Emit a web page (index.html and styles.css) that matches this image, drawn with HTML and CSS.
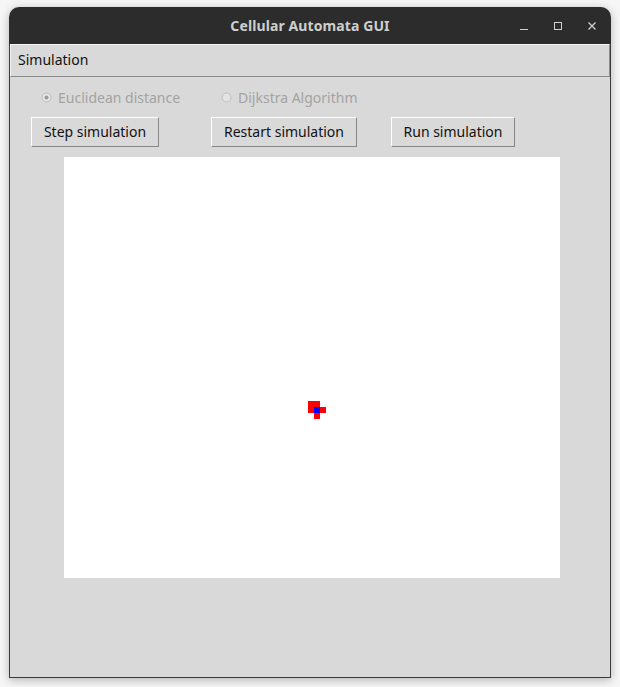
FILE: index.html
```html
<!DOCTYPE html>
<html>
<head>
<meta charset="utf-8">
<link rel="stylesheet" href="styles.css">
</head>
<body>
<div class="window">
  <div class="titlebar">
    <div class="title-spacer"></div>
    <div class="title">Cellular Automata GUI</div>
    <div class="controls">
      <svg class="ctl" width="10" height="10" viewBox="0 0 10 10"><line x1="1" y1="8.5" x2="9" y2="8.5" stroke="#cfcfcf" stroke-width="1"/></svg>
      <svg class="ctl" width="10" height="10" viewBox="0 0 10 10"><rect x="1.5" y="1.5" width="7" height="7" fill="none" stroke="#cfcfcf" stroke-width="1"/></svg>
      <svg class="ctl" width="10" height="10" viewBox="0 0 10 10"><path d="M1.5 1.5 L8.5 8.5 M8.5 1.5 L1.5 8.5" stroke="#cfcfcf" stroke-width="1.3"/></svg>
    </div>
  </div>
  <div class="client">
    <div class="menubar"><span class="menu-item">Simulation</span></div>
    <div class="radios">
      <label class="radio radio-1">
        <svg width="11" height="11" viewBox="0 0 11 11"><circle cx="5.5" cy="5.5" r="4.5" fill="#e4e4e4" stroke="#bdbdbd" stroke-width="1"/><circle cx="5.5" cy="5.5" r="2" fill="#9a9a9a"/></svg>
        <span>Euclidean distance</span>
      </label>
      <label class="radio radio-2">
        <svg width="11" height="11" viewBox="0 0 11 11"><circle cx="5.5" cy="5.5" r="4.5" fill="#e4e4e4" stroke="#bdbdbd" stroke-width="1"/></svg>
        <span>Dijkstra Algorithm</span>
      </label>
    </div>
    <div class="buttons">
      <button class="btn btn-step">Step simulation</button>
      <button class="btn btn-restart">Restart simulation</button>
      <button class="btn btn-run">Run simulation</button>
    </div>
    <div class="canvas">
      <svg width="496" height="421" viewBox="0 0 496 421">
        <rect x="0" y="0" width="496" height="421" fill="#ffffff"/>
        <rect x="244" y="244" width="12" height="6" fill="#ff0000"/>
        <rect x="244" y="250" width="6" height="6" fill="#ff0000"/>
        <rect x="250" y="250" width="6" height="6" fill="#0000ff"/>
        <rect x="256" y="250" width="6" height="6" fill="#ff0000"/>
        <rect x="250" y="256" width="6" height="6" fill="#ff0000"/>
      </svg>
    </div>
  </div>
</div>
</body>
</html>
```
FILE: styles.css
```css
html, body {
  margin: 0;
  padding: 0;
  background: #f6f6f6;
}
body {
  width: 620px;
  height: 687px;
  overflow: hidden;
  font-family: "Noto Sans", "DejaVu Sans", sans-serif;
}
.window {
  margin: 7px 0 0 9px;
  width: 602px;
  box-shadow: 0 2px 10px rgba(0,0,0,0.28);
  border-radius: 10px 10px 0 0;
}
.titlebar {
  height: 37px;
  background: #2c2c2c;
  border-radius: 10px 10px 0 0;
  display: grid;
  grid-template-columns: 1fr auto 1fr;
  align-items: center;
}
.title {
  color: #cfcfcf;
  font-weight: bold;
  font-size: 14px;
  letter-spacing: 0.1px;
}
.controls {
  display: flex;
  justify-content: flex-end;
  align-items: center;
  gap: 24px;
  padding-right: 14px;
}
.ctl { display: block; }
.client {
  background: #d9d9d9;
  border: 1px solid #3a3a3a;
  border-top: none;
  height: 633px;
}
.menubar {
  height: 31px;
  box-sizing: content-box;
  border-top: 1px solid #f4f4f4;
  border-left: 1px solid #f4f4f4;
  border-bottom: 1px solid #8a8a8a;
  border-right: 1px solid #8a8a8a;
  display: flex;
  align-items: center;
  padding-left: 7px;
}
.menu-item {
  font-size: 14px;
  color: #111;
  margin-bottom: 2px;
}
.radios {
  display: flex;
  height: 18px;
  margin-top: 11px;
  align-items: center;
  padding-left: 31px;
}
.radio {
  display: flex;
  align-items: center;
  gap: 6px;
  font-size: 14px;
  color: #a3a3a3;
}
.radio svg { display: block; }
.radio-1 { width: 180px; }
.buttons {
  display: flex;
  margin-top: 11px;
  padding-left: 21px;
}
.btn {
  height: 30px;
  box-sizing: border-box;
  background: #d9d9d9;
  border-top: 1px solid #ffffff;
  border-left: 1px solid #ffffff;
  border-right: 1px solid #878787;
  border-bottom: 1px solid #878787;
  font-family: "Noto Sans", "DejaVu Sans", sans-serif;
  font-size: 14px;
  color: #111;
  padding: 0 0 2px 0;
  margin: 0;
}
.btn-step { width: 128px; margin-right: 52px; }
.btn-restart { width: 146px; margin-right: 34px; }
.btn-run { width: 124px; }
.canvas {
  margin: 10px 0 0 54px;
  width: 496px;
  height: 421px;
}
.canvas svg { display: block; }
```
